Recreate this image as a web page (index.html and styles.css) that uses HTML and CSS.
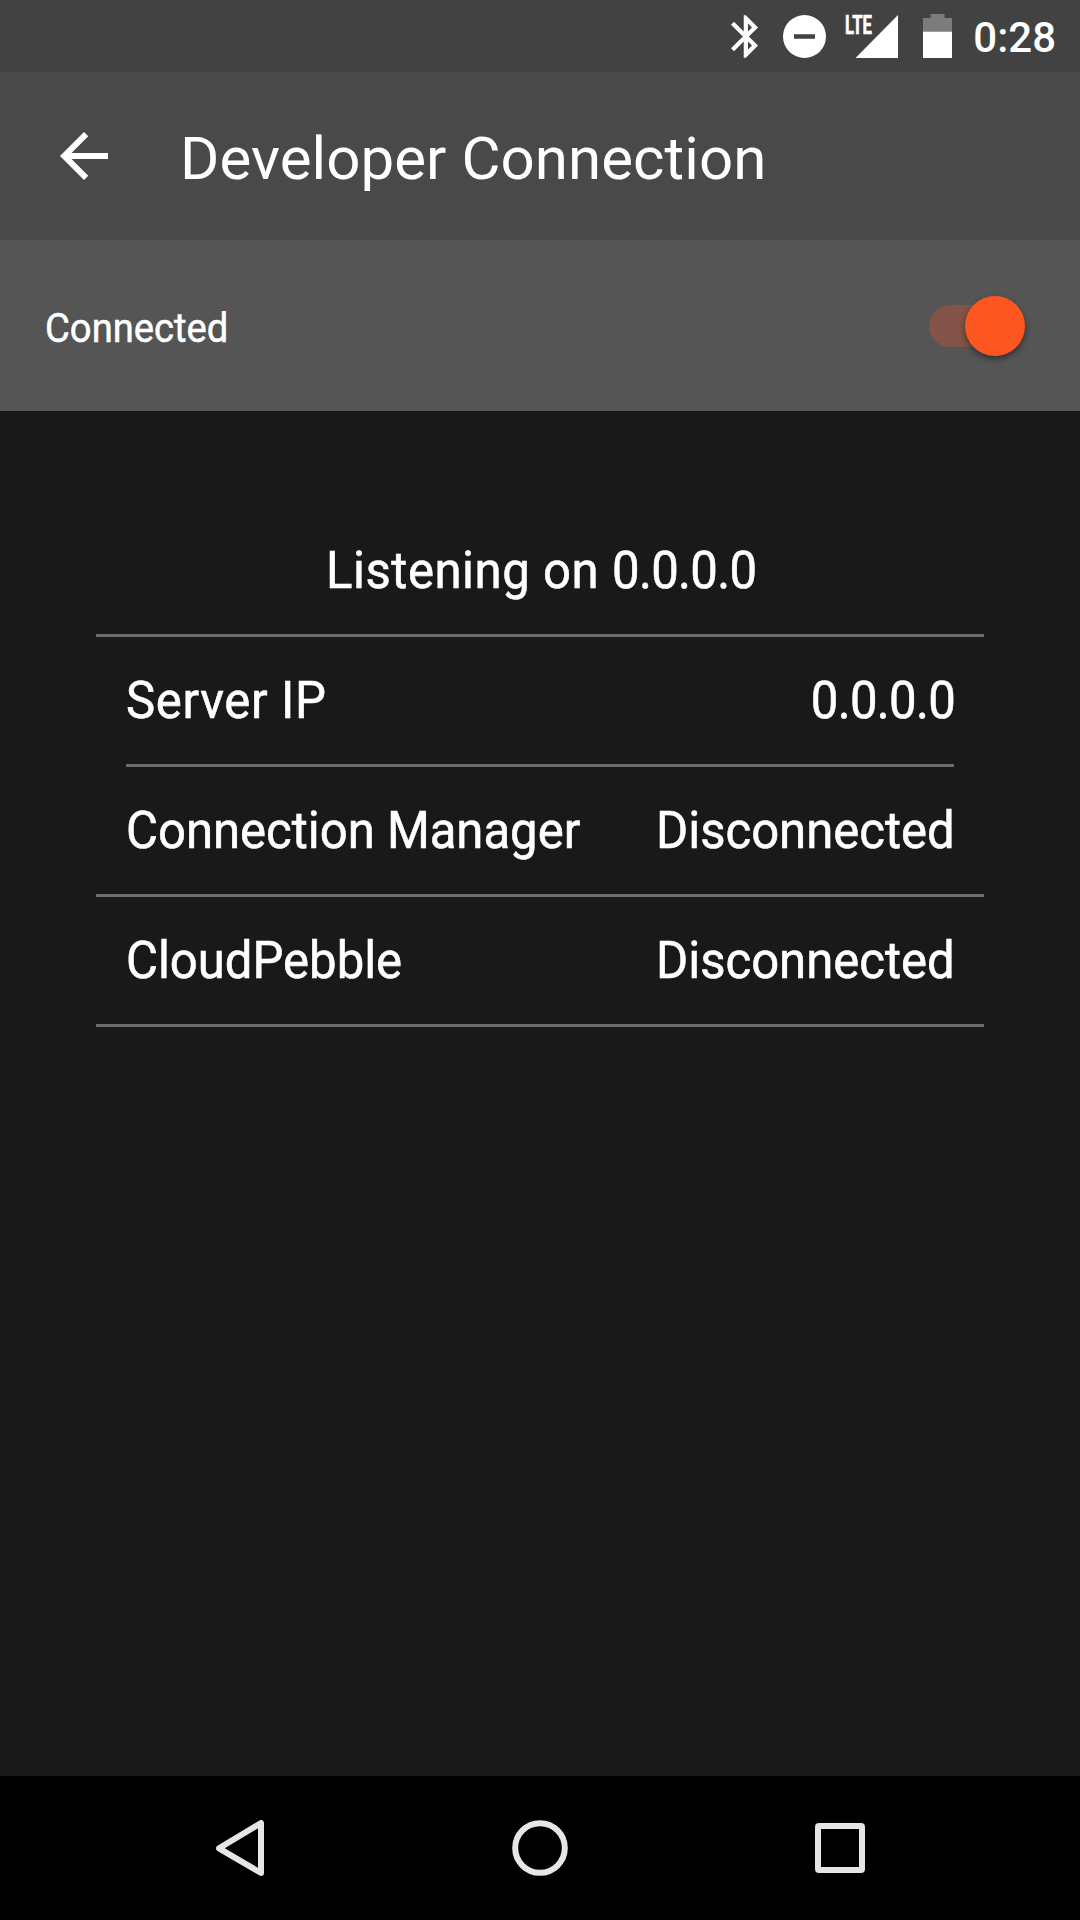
FILE: index.html
```
<!DOCTYPE html>
<html lang="en">
<head>
<meta charset="utf-8">
<title>Developer Connection</title>
<link rel="stylesheet" href="styles.css">
</head>
<body>
<div class="screen">
  <div class="status-bar">
    <svg class="bluetooth" viewBox="5 2 12.71 20"><path d="M17.71 7.71L12 2h-1v7.59L6.41 5 5 6.41 10.59 12 5 17.59 6.41 19 11 14.41V22h1l5.71-5.71-4.3-4.29 4.3-4.29zM13 5.83l1.88 1.88L13 9.59V5.83zm1.88 10.46L13 18.17v-3.76l1.88 1.88z"/></svg>
    <svg class="dnd" viewBox="0 0 43 43"><path fill-rule="evenodd" d="M21.5 0a21.5 21.5 0 1 0 0 43a21.5 21.5 0 1 0 0-43zM11 19.2h21v4.6H11z"/></svg>
    <svg class="signal" viewBox="0 -8 53 59"><text class="lte" x="0" y="19" textLength="27" lengthAdjust="spacingAndGlyphs">LTE</text><path d="M53 0v43H10.5z"/></svg>
    <svg class="battery" viewBox="0 0 29 44"><path class="battery-empty" d="M7.5 0h14v4H29v13H0V4h7.5z"/><path d="M0 17.5h29V44H0z"/></svg>
    <span class="clock">0:28</span>
  </div>
  <header class="app-bar">
    <svg class="back" viewBox="0 0 24 24"><path d="M20 11H7.83l5.59-5.59L12 4l-8 8 8 8 1.41-1.41L7.83 13H20v-2z"/></svg>
    <h1 class="title">Developer Connection</h1>
  </header>
  <div class="switch-bar">
    <span class="switch-label">Connected</span>
    <div class="switch"><div class="thumb"></div></div>
  </div>
  <main class="content">
    <div class="row heading"><span class="text listening">Listening on <span class="ip">0.0.0.0</span></span></div>
    <div class="inset">
      <div class="row"><span class="text server">Server IP</span><span class="text value ip">0.0.0.0</span></div>
    </div>
    <div class="row padded"><span class="text">Connection Manager</span><span class="text value">Disconnected</span></div>
    <div class="row padded"><span class="text">CloudPebble</span><span class="text value">Disconnected</span></div>
  </main>
  <nav class="nav-bar">
    <div class="nav-item"><svg width="48" height="56" viewBox="0 0 48 56"><path d="M45 3v50L3 28.3z"/></svg></div>
    <div class="nav-item"><svg width="56" height="56" viewBox="0 0 56 56"><circle cx="28" cy="28" r="24.8"/></svg></div>
    <div class="nav-item"><svg width="50" height="50" viewBox="0 0 50 50"><rect x="3" y="3" width="44" height="44" rx="1"/></svg></div>
  </nav>
</div>
</body>
</html>
```
FILE: styles.css
```
* {
  box-sizing: border-box;
}

body {
  margin: 0;
  background: #191919;
  color: #fff;
  font-family: Roboto, sans-serif;
}

.screen {
  width: 1080px;
  height: 1920px;
  display: flex;
  flex-direction: column;
  overflow: hidden;
}

svg {
  display: block;
  flex: none;
  fill: #fff;
}

.status-bar {
  height: 72px;
  padding-right: 24px;
  display: flex;
  justify-content: flex-end;
  align-items: center;
  background: #424242;
}

.bluetooth {
  width: 27px;
  height: 43px;
  margin-right: 25px;
}

.dnd {
  width: 43px;
  height: 43px;
  margin-right: 19px;
}

.signal {
  width: 53px;
  height: 59px;
  margin-right: 25px;
}

.lte {
  font-size: 25px;
  font-weight: 700;
  stroke: #fff;
  stroke-width: 0.6px;
}

.battery {
  width: 29px;
  height: 44px;
  margin-right: 21px;
}

.battery-empty {
  fill: #7c7c7c;
}

.clock {
  padding-top: 4px;
  font-size: 42px;
  font-weight: 500;
  line-height: 50px;
}

.app-bar {
  height: 168px;
  padding-left: 48px;
  display: flex;
  align-items: center;
  gap: 60px;
  background: #494949;
}

.back {
  width: 72px;
  height: 72px;
}

.title {
  margin: 0;
  padding-top: 5px;
  font-size: 60px;
  font-weight: 400;
  line-height: 72px;
  letter-spacing: 0.06px;
}

.switch-bar {
  height: 171px;
  padding: 0 55px 0 45px;
  display: flex;
  justify-content: space-between;
  align-items: center;
  background: #555;
}

.switch-label {
  padding-top: 6px;
  font-size: 40px;
  font-weight: 400;
  line-height: 48px;
  -webkit-text-stroke: 0.5px #fff;
  transform: scaleX(0.955);
  transform-origin: left;
}

.switch {
  width: 96px;
  height: 42px;
  display: flex;
  align-items: center;
  justify-content: flex-end;
  border-radius: 21px;
  background: linear-gradient(90deg, #835447 70px, transparent 70px);
}

.thumb {
  width: 60px;
  height: 60px;
  border-radius: 50%;
  background: #fd5621;
  box-shadow: 0 3px 6px rgba(0, 0, 0, 0.45);
}

.content {
  flex: 1;
  padding: 96px 96px 0;
}

.row {
  height: 130px;
  display: flex;
  justify-content: space-between;
  align-items: center;
  border-bottom: 3px solid #6c6c6c;
}

.heading {
  justify-content: center;
}

.padded {
  padding: 0 30px;
}

.inset {
  padding: 0 30px;
}

.text {
  font-size: 52px;
  font-weight: 400;
  line-height: 64px;
  white-space: nowrap;
  -webkit-text-stroke: 0.6px #fff;
  transform: scaleX(0.943);
  transform-origin: left;
}

.value {
  margin-right: -1px;
  transform-origin: right;
}

.server {
  letter-spacing: 0.7px;
}

.listening {
  padding-left: 2px;
  letter-spacing: 0.6px;
  transform-origin: center;
}

.ip {
  letter-spacing: -0.7px;
}

.nav-bar {
  height: 144px;
  padding: 0 90px;
  display: grid;
  grid-template-columns: repeat(3, 1fr);
  background: #000;
}

.nav-item {
  display: flex;
  align-items: center;
  justify-content: center;
}

.nav-item svg {
  fill: none;
  stroke: #e6e6e6;
  stroke-width: 6;
  stroke-linejoin: round;
}
```
